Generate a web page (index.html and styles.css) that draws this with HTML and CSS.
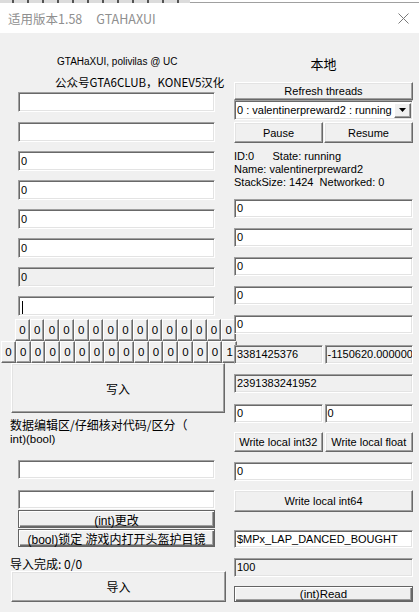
FILE: index.html
```html
<!DOCTYPE html>
<html lang="zh">
<head>
  <meta charset="UTF-8" />
  <title>GTAHAXUI</title>
  <link rel="stylesheet" href="styles.css">
</head>
<body>
  <div class="behind"></div>
  <div class="window">
    <div class="titlebar">
      <span>适用版本1.58</span>
      <span class="title-name">GTAHAXUI</span>
      <svg class="close" width="11" height="11" viewBox="0 0 11 11">
        <path d="M0.5 0.5L10.5 10.5M10.5 0.5L0.5 10.5" stroke="#7a7a7a" stroke-width="1" fill="none"/>
      </svg>
    </div>

    <div class="client">
      <div class="col-left">
        <div class="credit en">GTAHaXUI, polivilas @ UC</div>
        <div class="credit cn">公众号GTA6CLUB，KONEV5汉化</div>

        <div class="edit-stack">
          <div class="edit"></div>
          <div class="edit"></div>
          <div class="edit">0</div>
          <div class="edit">0</div>
          <div class="edit">0</div>
          <div class="edit">0</div>
          <div class="edit off">0</div>
          <div class="edit"><span class="caret"></span></div>
        </div>

        <div class="cells r1">
          <span>0</span><span>0</span><span>0</span><span>0</span><span>0</span>
          <span>0</span><span>0</span><span>0</span><span>0</span><span>0</span>
          <span>0</span><span>0</span><span>0</span><span>0</span><span>0</span>
        </div>
        <div class="cells r2">
          <span>0</span><span>0</span><span>0</span><span>0</span><span>0</span>
          <span>0</span><span>0</span><span>0</span><span>0</span><span>0</span>
          <span>0</span><span>0</span><span>0</span><span>0</span><span>0</span>
          <span>1</span>
        </div>

        <button class="btn big">写入</button>

        <div class="note">
          <span class="note-cn">数据编辑区/仔细核对代码/区分（</span>
          <span class="note-en">int)(bool)</span>
        </div>

        <div class="edit low first"></div>
        <div class="edit low"></div>
        <button class="btn framed wide">(int)更改</button>
        <button class="btn framed wide">(bool)锁定 游戏内打开头盔护目镜</button>

        <p class="status">导入完成: 0/0</p>
        <button class="btn import">导入</button>
      </div>

      <div class="col-right">
        <div class="heading">本地</div>
        <button class="btn refresh">Refresh threads</button>
        <div class="combo">
          <span class="combo-text">0 : valentinerpreward2 : running</span>
          <span class="combo-drop">
            <svg width="7" height="4" viewBox="0 0 7 4"><path d="M0 0H7L3.5 4Z" fill="#000"/></svg>
          </span>
        </div>
        <div class="pair pause-row">
          <button class="btn">Pause</button>
          <button class="btn">Resume</button>
        </div>
        <div class="info">ID:0      State: running
Name: valentinerpreward2
StackSize: 1424  Networked: 0</div>

        <div class="edit r">0</div>
        <div class="edit r">0</div>
        <div class="edit r">0</div>
        <div class="edit r">0</div>
        <div class="edit r">0</div>

        <div class="pair gap-11">
          <div class="edit off">3381425376</div>
          <div class="edit off">-1150620.000000</div>
        </div>
        <div class="edit off r">2391383241952</div>
        <div class="pair gap-11">
          <div class="edit">0</div>
          <div class="edit">0</div>
        </div>
        <div class="pair btn-row">
          <button class="btn">Write local int32</button>
          <button class="btn">Write local float</button>
        </div>
        <div class="edit r">0</div>
        <button class="btn int64">Write local int64</button>
        <div class="edit name">$MPx_LAP_DANCED_BOUGHT</div>
        <div class="edit off r">100</div>
        <button class="btn framed read">(int)Read</button>
      </div>
    </div>
  </div>
</body>
</html>
```

FILE: styles.css
```css
* {
  box-sizing: border-box;
}

html, body {
  margin: 0;
  padding: 0;
}

body {
  width: 419px;
  height: 612px;
  overflow: hidden;
  background: #f0f0f0;
  font-family: "Liberation Sans", Arial, "Noto Sans CJK SC", sans-serif;
  font-size: 11px;
  color: #000;
}

/* sliver of the window underneath */
.behind {
  height: 3px;
  background: #fff;
  border-bottom: 1px solid #a0a0a0;
  position: relative;
}

.behind::before {
  content: "";
  display: block;
  width: 190px;
  height: 3px;
  background: repeating-linear-gradient(90deg, #dcdcdc 0 12px, #555 12px 14px, #dcdcdc 14px 15px);
}

.titlebar {
  height: 30px;
  background: #fff;
  display: flex;
  align-items: center;
  padding: 0 10px 0 8px;
  font-family: "Noto Sans CJK SC", sans-serif;
  font-size: 12.5px;
  color: #8f8f8f;
}

.title-name {
  margin-left: 14px;
}

.close {
  margin-left: auto;
}

.client {
  display: flex;
}

.col-left {
  width: 234px;
  flex: none;
  padding-top: 19px;
}

.col-right {
  width: 179px;
  flex: none;
  padding-top: 22px;
  position: relative;
  z-index: 1;
}

.credit {
  height: 20px;
  line-height: 20px;
  white-space: nowrap;
}

.credit.en {
  padding-left: 57px;
  font-size: 10px;
}

.credit.cn {
  padding-left: 55px;
  font-family: "Noto Sans CJK SC", sans-serif;
  font-size: 11.5px;
}

/* sunken edit box */
.edit {
  height: 20px;
  background: #fff;
  border: 1px solid;
  border-color: #a0a0a0 #fff #fff #a0a0a0;
  box-shadow: inset 1px 1px #696969, inset -1px -1px #e3e3e3;
  padding: 0 2px;
  line-height: 18px;
  white-space: nowrap;
  overflow: hidden;
}

.edit.off {
  background: #f0f0f0;
}

.edit-stack .edit,
.edit.low {
  margin-left: 18px;
  width: 197px;
  margin-top: 9px;
}

.edit-stack .edit:first-child {
  margin-top: 0;
}

.edit-stack .edit:nth-child(2) {
  margin-top: 10px;
}

.caret {
  display: inline-block;
  width: 1px;
  height: 13px;
  background: #000;
  vertical-align: middle;
  margin-left: 1px;
}

/* raised push button */
.btn {
  display: flex;
  align-items: center;
  justify-content: center;
  background: #f0f0f0;
  border: 1px solid;
  border-color: #fff #696969 #696969 #fff;
  box-shadow: inset -1px -1px #a0a0a0, inset 1px 1px #e3e3e3;
  font: inherit;
  color: #000;
  padding: 0;
  white-space: nowrap;
}

.btn.framed {
  border-color: #646464;
  box-shadow: inset 1px 1px #fff, inset -1px -1px #696969, inset -2px -2px #a0a0a0;
}

.cells {
  display: flex;
  height: 22px;
}

.cells span {
  flex: 1;
  display: flex;
  align-items: center;
  justify-content: center;
  background: #f0f0f0;
  border: 1px solid;
  border-color: #fff #696969 #696969 #fff;
  box-shadow: inset -1px -1px #a0a0a0;
  font-size: 11.5px;
}

.cells.r1 {
  margin: 3px 0 0 15px;
  width: 221px;
}

.cells.r2 {
  margin-left: 1px;
  width: 236px;
}

.btn.big {
  margin-left: 11px;
  width: 214px;
  height: 50px;
  font-size: 12px;
}

.note {
  margin: 4px 0 0 10px;
}

.note span {
  display: block;
  height: 15px;
  line-height: 15px;
  white-space: nowrap;
}

.note-cn {
  font-family: "Noto Sans CJK SC", sans-serif;
  font-size: 12px;
}

.note-en {
  font-size: 11.5px;
}

.edit.low {
  height: 19px;
  line-height: 17px;
  margin-top: 11px;
}

.edit.low.first {
  margin-top: 13px;
}

.btn.wide {
  margin: 1px 0 0 18px;
  width: 197px;
  height: 18px;
  font-size: 12px;
}

.status {
  margin: 10px 0 0 10px;
  line-height: 14px;
  font-family: "Noto Sans CJK SC", sans-serif;
  font-size: 12px;
}

.btn.import {
  margin-left: 11px;
  width: 215px;
  height: 31px;
  font-size: 12px;
}

/* right column */
.heading {
  height: 18px;
  line-height: 18px;
  text-align: center;
  font-family: "Noto Sans CJK SC", sans-serif;
  font-size: 13px;
}

.btn.refresh {
  width: 100%;
  height: 18px;
  margin-top: 9px;
}

.combo {
  height: 20px;
  display: flex;
  align-items: center;
  background: #fff;
  border: 1px solid;
  border-color: #a0a0a0 #fff #fff #a0a0a0;
  box-shadow: inset 1px 1px #696969, inset -1px -1px #e3e3e3;
  padding: 0 1px 0 2px;
}

.combo-text {
  flex: 1;
  white-space: nowrap;
  overflow: hidden;
}

.combo-drop {
  width: 17px;
  height: 15px;
  display: flex;
  align-items: center;
  justify-content: center;
  background: #f0f0f0;
  border: 1px solid;
  border-color: #fff #696969 #696969 #fff;
  box-shadow: inset -1px -1px #a0a0a0;
}

.pair {
  display: flex;
  gap: 2px;
}

.pair > * {
  flex: 1;
  min-width: 0;
}

.pause-row {
  margin-top: 2px;
  height: 21px;
  gap: 1px;
}

.info {
  margin-top: 7px;
  line-height: 13px;
  white-space: pre;
}

.edit.r {
  height: 19px;
  line-height: 17px;
  margin-top: 10px;
}

.pair .edit {
  height: 19px;
  line-height: 17px;
}

.gap-11 {
  margin-top: 11px;
}

.btn-row {
  margin-top: 9px;
  height: 20px;
}

.btn.int64 {
  width: 100%;
  height: 22px;
  margin-top: 9px;
}

.edit.name {
  height: 18px;
  line-height: 16px;
  margin-top: 18px;
}

.btn.read {
  width: 100%;
  height: 16px;
  margin-top: 9px;
  font-size: 11.5px;
}
```
